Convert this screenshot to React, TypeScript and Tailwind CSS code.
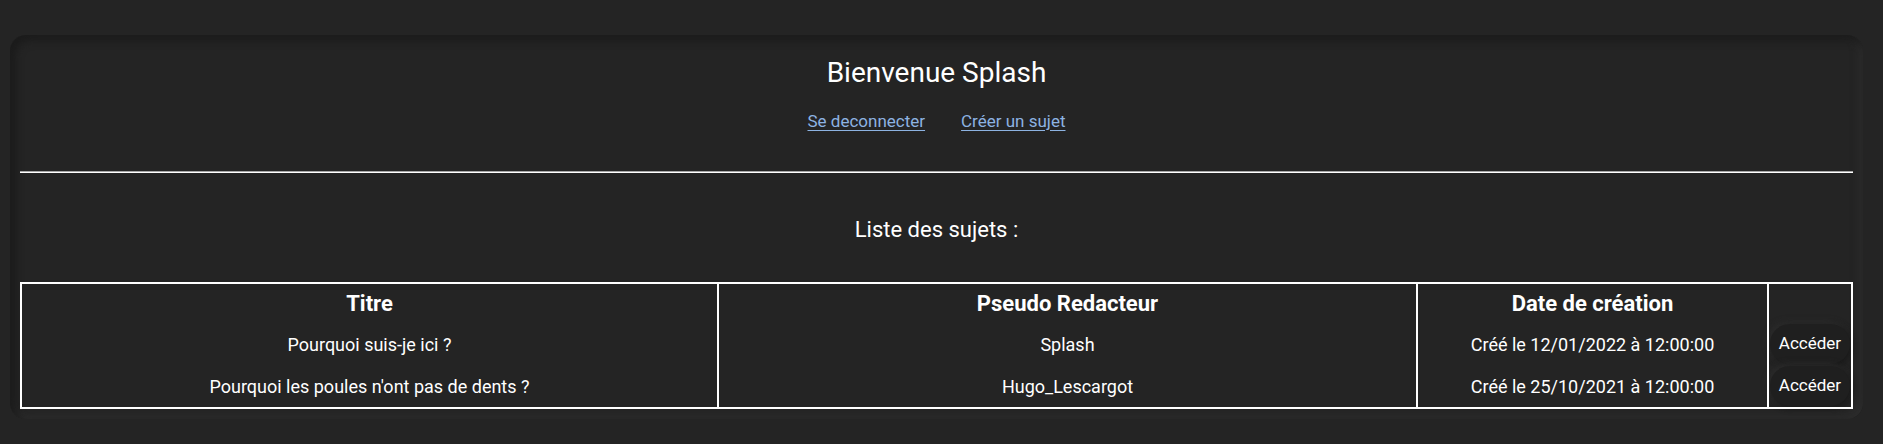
import React from "react";

const rows = [
  { titre: "Pourquoi suis-je ici ?", pseudo: "Splash", date: "Créé le 12/01/2022 à 12:00:00", h: "h-[42px]" },
  { titre: "Pourquoi les poules n'ont pas de dents ?", pseudo: "Hugo_Lescargot", date: "Créé le 25/10/2021 à 12:00:00", h: "h-[43px]" },
];

export default function App() {
  return (
    <div
      className="min-h-[444px] w-full bg-[#242424] pt-[35px] pl-[10px] text-white"
      style={{ fontFamily: "Roboto, 'Liberation Sans', sans-serif" }}
    >
      <div className="w-[1853px] rounded-[16px] bg-[#242424] px-[10px] pt-[20px] pb-[10px] shadow-[inset_5px_5px_8px_#1b1b1b,inset_-4px_-4px_8px_#2d2d2d]">
        <h1 className="text-center text-[28px] leading-[36px] font-normal text-white">Bienvenue Splash</h1>
        <div className="mt-[18px] flex justify-center gap-[36px] text-[17px] leading-[24px]">
          <a href="#" className="text-[#8db3e2] underline underline-offset-[3px]">Se deconnecter</a>
          <a href="#" className="text-[#8db3e2] underline underline-offset-[3px]">Créer un sujet</a>
        </div>
        <div className="mt-[38px] h-0 border-t border-b border-t-[#a8a8a8] border-b-white" />
        <p className="mt-[42px] text-center text-[22px] leading-[30px] text-white">Liste des sujets :</p>
        <table className="mt-[37px] w-full table-fixed border-collapse border-2 border-white">
          <colgroup>
            <col className="w-[697px]" />
            <col className="w-[699px]" />
            <col className="w-[351px]" />
            <col />
          </colgroup>
          <thead>
            <tr className="h-[40px]">
              <th className="border-x-2 border-white p-0 text-center align-middle text-[22px] font-bold">Titre</th>
              <th className="border-x-2 border-white p-0 text-center align-middle text-[22px] font-bold">Pseudo Redacteur</th>
              <th className="border-x-2 border-white p-0 text-center align-middle text-[22px] font-bold">Date de création</th>
              <th className="border-x-2 border-white p-0" />
            </tr>
          </thead>
          <tbody>
            {rows.map((r) => (
              <tr key={r.titre} className={r.h}>
                <td className="border-x-2 border-white p-0 text-center align-middle text-[18px]">{r.titre}</td>
                <td className="border-x-2 border-white p-0 text-center align-middle text-[18px]">{r.pseudo}</td>
                <td className="border-x-2 border-white p-0 text-center align-middle text-[18px]">{r.date}</td>
                <td className="border-x-2 border-white p-0 text-center align-middle">
                  <button className="mx-auto flex h-[40px] w-[80px] items-center justify-center rounded-full bg-[#1f1f1f] text-[17px] text-white shadow-[2px_2px_6px_#191919,-2px_-2px_6px_#2e2e2e]">
                    Accéder
                  </button>
                </td>
              </tr>
            ))}
          </tbody>
        </table>
      </div>
    </div>
  );
}
